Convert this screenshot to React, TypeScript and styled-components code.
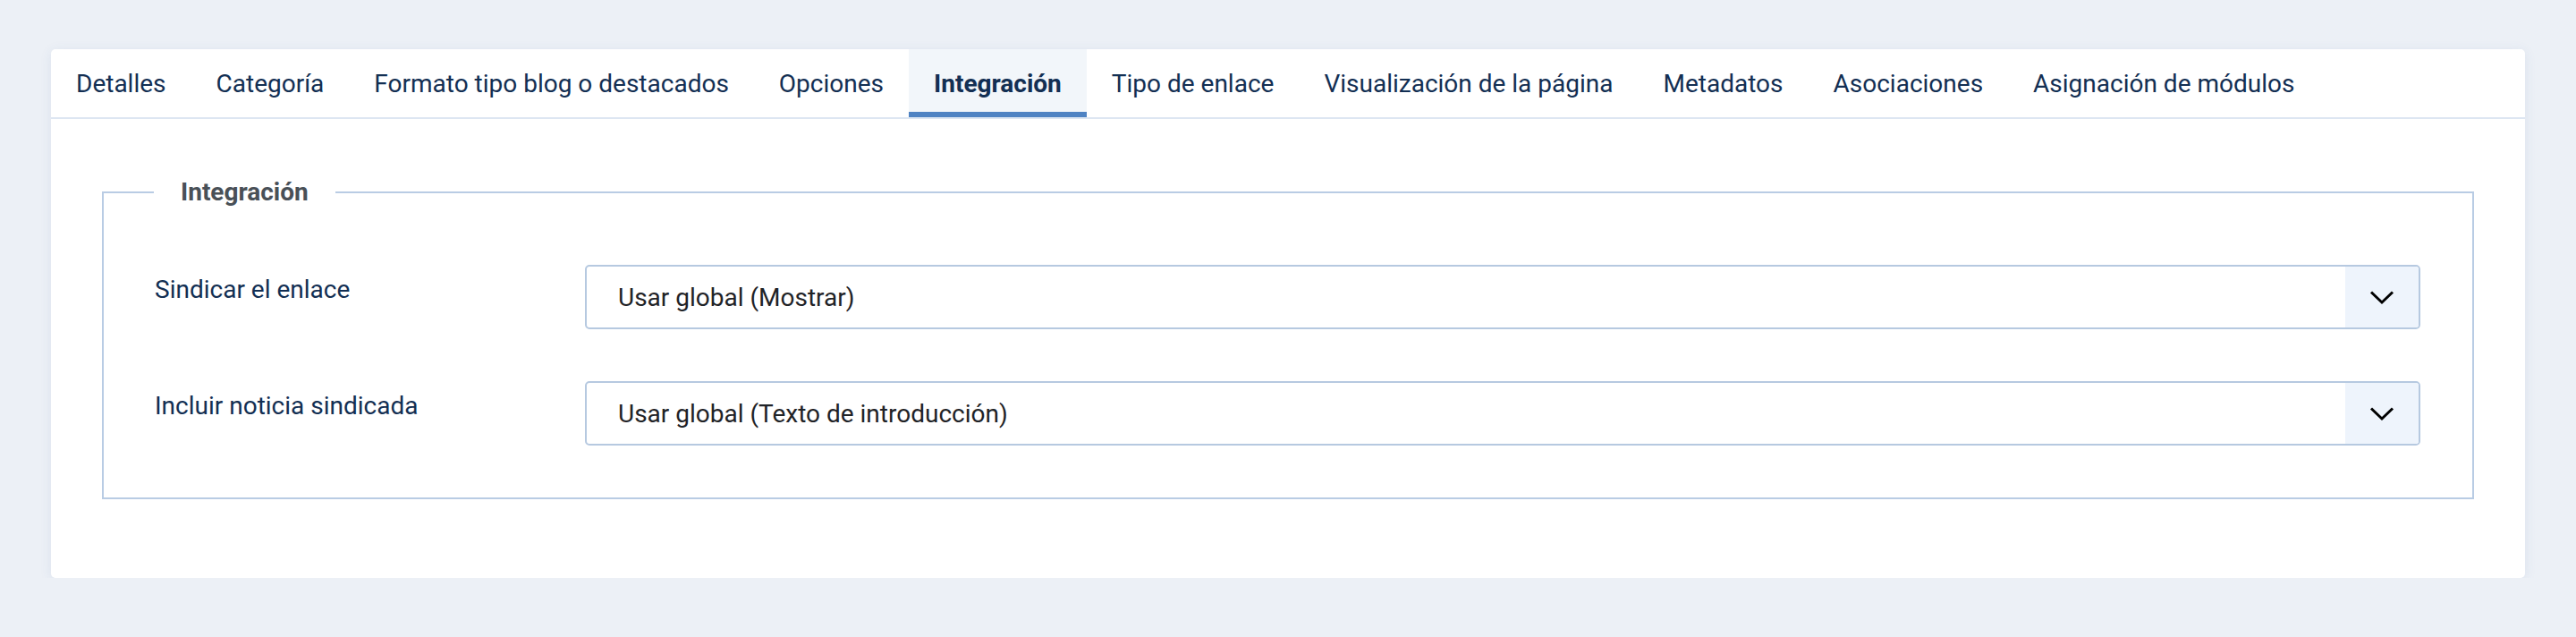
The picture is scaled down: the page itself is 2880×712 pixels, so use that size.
import React from "react";
import styled, { createGlobalStyle } from "styled-components";

const GlobalStyle = createGlobalStyle`
  html, body {
    margin: 0;
    padding: 0;
    background: #ecf0f6;
    font-family: Roboto, "Liberation Sans", Arial, sans-serif;
  }
  * { box-sizing: border-box; }
`;

const Page = styled.div`
  padding: 55px 57px 0;
`;

const Card = styled.section`
  background: #ffffff;
  border-radius: 5px;
  box-shadow: 0 2px 14px rgba(56, 92, 150, 0.09);
`;

const TabList = styled.nav`
  display: flex;
  border-bottom: 2px solid #dde6f2;
`;

const Tab = styled.div<{ $active?: boolean }>`
  display: flex;
  align-items: center;
  height: 76px;
  padding: 0 28px;
  font-size: 28px;
  white-space: nowrap;
  color: #132f53;
  font-weight: ${(p) => (p.$active ? 700 : 400)};
  background: ${(p) => (p.$active ? "#f2f6fa" : "transparent")};
  box-shadow: ${(p) => (p.$active ? "inset 0 -6px 0 #4f83c3" : "none")};
`;

const Body = styled.div`
  padding: 65px 57px 88px;
`;

const Fieldset = styled.fieldset`
  margin: 0;
  min-width: 0;
  border: 2px solid #b9cce4;
  padding: 65px 58px 58px 57px;
`;

const Legend = styled.legend`
  margin-left: -1px;
  padding: 0 30px;
  font-size: 28px;
  line-height: 33px;
  font-weight: 700;
  color: #495057;
`;

const Rows = styled.div`
  display: flex;
  flex-direction: column;
  gap: 58px;
`;

const Row = styled.div`
  display: grid;
  grid-template-columns: 481px 1fr;
  align-items: start;
`;

const Label = styled.label`
  padding-top: 7px;
  font-size: 28px;
  line-height: 42px;
  color: #132f53;
`;

const Select = styled.div`
  display: flex;
  height: 72px;
  border: 2px solid #b6c9e0;
  border-radius: 5px;
  overflow: hidden;
  background: #ffffff;
`;

const SelectValue = styled.div`
  flex: 1;
  display: flex;
  align-items: center;
  padding-left: 35px;
  font-size: 28px;
  color: #1f2327;
`;

const SelectButton = styled.div`
  width: 82px;
  display: flex;
  align-items: center;
  justify-content: center;
  background: #eef4fc;
`;

const Chevron = () => (
  <svg width="28" height="17" viewBox="0 0 28 17" fill="none">
    <polyline
      points="2,2.5 14,14 26,2.5"
      stroke="#000"
      strokeWidth="3"
      strokeLinecap="butt"
      strokeLinejoin="miter"
    />
  </svg>
);

const tabs = [
  "Detalles",
  "Categoría",
  "Formato tipo blog o destacados",
  "Opciones",
  "Integración",
  "Tipo de enlace",
  "Visualización de la página",
  "Metadatos",
  "Asociaciones",
  "Asignación de módulos",
];

const fields = [
  { label: "Sindicar el enlace", value: "Usar global (Mostrar)" },
  { label: "Incluir noticia sindicada", value: "Usar global (Texto de introducción)" },
];

export default function App() {
  return (
    <>
      <GlobalStyle />
      <Page>
        <Card>
          <TabList>
            {tabs.map((t) => (
              <Tab key={t} $active={t === "Integración"}>
                {t}
              </Tab>
            ))}
          </TabList>
          <Body>
            <Fieldset>
              <Legend>Integración</Legend>
              <Rows>
                {fields.map((f) => (
                  <Row key={f.label}>
                    <Label>{f.label}</Label>
                    <Select>
                      <SelectValue>{f.value}</SelectValue>
                      <SelectButton>
                        <Chevron />
                      </SelectButton>
                    </Select>
                  </Row>
                ))}
              </Rows>
            </Fieldset>
          </Body>
        </Card>
      </Page>
    </>
  );
}
